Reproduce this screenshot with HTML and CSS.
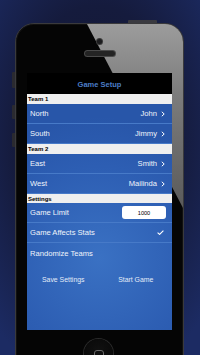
FILE: index.html
```html
<!DOCTYPE html>
<html>
<head>
<meta charset="utf-8">
<link rel="stylesheet" href="styles.css">
</head>
<body>
<div class="stage">
  <div class="btn-side btn-mute"></div>
  <div class="btn-side btn-vol1"></div>
  <div class="btn-side btn-vol2"></div>
  <div class="btn-top"></div>
  <div class="phone">
    <div class="camera"></div>
    <div class="speaker"></div>
    <div class="screen">
      <div class="nav">Game Setup</div>
      <div class="section">Team 1</div>
      <div class="row"><span class="label">North</span><span class="value">John<svg class="chev" viewBox="0 0 4 6" width="4" height="6"><path d="M0.8 0.8 L3.2 3 L0.8 5.2" fill="none" stroke="#fff" stroke-width="1"/></svg></span></div>
      <div class="row"><span class="label">South</span><span class="value">Jimmy<svg class="chev" viewBox="0 0 4 6" width="4" height="6"><path d="M0.8 0.8 L3.2 3 L0.8 5.2" fill="none" stroke="#fff" stroke-width="1"/></svg></span></div>
      <div class="section">Team 2</div>
      <div class="row"><span class="label">East</span><span class="value">Smith<svg class="chev" viewBox="0 0 4 6" width="4" height="6"><path d="M0.8 0.8 L3.2 3 L0.8 5.2" fill="none" stroke="#fff" stroke-width="1"/></svg></span></div>
      <div class="row"><span class="label">West</span><span class="value">Mailinda<svg class="chev" viewBox="0 0 4 6" width="4" height="6"><path d="M0.8 0.8 L3.2 3 L0.8 5.2" fill="none" stroke="#fff" stroke-width="1"/></svg></span></div>
      <div class="section section-short">Settings</div>
      <div class="row"><span class="label">Game Limit</span><span class="field">1000</span></div>
      <div class="row"><span class="label">Game Affects Stats</span><svg class="check" viewBox="0 0 7 5" width="7" height="5"><path d="M0.6 2.6 L2.6 4.4 L6.4 0.6" fill="none" stroke="#fff" stroke-width="1.1"/></svg></div>
      <div class="row row-last"><span class="label">Randomize Teams</span></div>
      <div class="actions">
        <span>Save Settings</span>
        <span>Start Game</span>
      </div>
    </div>
    <div class="home"><div class="home-square"></div></div>
  </div>
</div>
</body>
</html>
```
FILE: styles.css
```css
html, body {
  margin: 0;
  height: 355px;
  overflow: hidden;
}
body {
  background: radial-gradient(ellipse 75% 70% at 48% 40%, #13172f 0%, #151b3d 55%, #1c2b63 100%);
  font-family: "Liberation Sans", Arial, sans-serif;
}
.stage {
  position: relative;
  padding: 23px 0 0 15px;
}
.phone {
  position: relative;
  overflow: hidden;
  width: 169px;
  height: 372px;
  box-sizing: border-box;
  border: 1px solid #3a3a3c;
  border-radius: 19px;
  background: #050505;
  padding: 49px 11px 0;
  box-shadow: inset 0 0 0 1px #111;
}
.phone::before {
  content: "";
  position: absolute;
  left: 0;
  top: 0;
  width: 167px;
  height: 200px;
  background: linear-gradient(180deg, #9c9c9c 0%, #7c7c7c 35%, #565656 100%);
  clip-path: polygon(71px 0, 167px 0, 167px 184px);
}
.camera {
  position: absolute;
  left: 81px;
  top: 15px;
  width: 5px;
  height: 5px;
  border-radius: 50%;
  background: #1c1c1e;
  box-shadow: 0 0 0 1px #3a3a3a;
}
.speaker {
  position: absolute;
  left: 69px;
  top: 27px;
  width: 30px;
  height: 5px;
  border-radius: 3px;
  background: #242424;
  box-shadow: 0 0 0 1px #4a4a4a;
}
.screen {
  position: relative;
  z-index: 1;
  height: 257px;
  display: flex;
  flex-direction: column;
  background: radial-gradient(ellipse 95% 55% at 50% 72%, #3a71c3 0%, #2d5eb3 65%, #2856a9 100%);
  color: #fff;
}
.nav {
  height: 21px;
  box-sizing: border-box;
  padding-top: 1px;
  background: #000;
  display: flex;
  align-items: center;
  justify-content: center;
  color: #4b7dc7;
  font-weight: bold;
  font-size: 7.5px;
}
.section {
  height: 10px;
  background: #efefef;
  color: #000;
  font-weight: bold;
  font-size: 6px;
  padding-left: 1px;
  display: flex;
  align-items: center;
}
.section-short {
  height: 9px;
}
.row {
  height: 20px;
  box-sizing: border-box;
  display: flex;
  align-items: center;
  padding: 0 7px 0 3px;
  font-size: 7.6px;
  color: #f1f5fb;
  border-bottom: 1px solid #477ac8;
}
.row-last {
  border-bottom: none;
}
.label {
  flex: 1;
}
.value {
  display: flex;
  align-items: center;
  gap: 4px;
}
.chev {
  display: block;
}
.field {
  width: 44px;
  height: 13px;
  margin-right: -1px;
  background: #fff;
  border-radius: 3px;
  color: #000;
  font-size: 5.6px;
  display: flex;
  align-items: center;
  justify-content: center;
}
.check {
  display: block;
  margin-right: 1px;
}
.actions {
  display: grid;
  grid-template-columns: 1fr 1fr;
  margin-top: 13px;
  font-size: 6.9px;
  color: #e4ecf8;
  text-align: center;
}
.home {
  position: absolute;
  left: 68px;
  top: 315px;
  width: 29px;
  height: 29px;
  border-radius: 50%;
  background: radial-gradient(circle at 50% 40%, #111 0%, #060606 100%);
  box-shadow: 0 0 0 1px #2a2a2a;
  display: flex;
  justify-content: center;
  padding-top: 11px;
  box-sizing: border-box;
}
.home-square {
  width: 10px;
  height: 10px;
  border: 1px solid #6a6a6a;
  border-radius: 3px;
  box-sizing: border-box;
}
.btn-side {
  position: absolute;
  left: 12px;
  width: 3px;
  background: #2a2a30;
  border-radius: 1px 0 0 1px;
}
.btn-mute { top: 72px; height: 16px; }
.btn-vol1 { top: 105px; height: 14px; }
.btn-vol2 { top: 133px; height: 14px; }
.btn-top {
  position: absolute;
  left: 128px;
  top: 20px;
  width: 29px;
  height: 3px;
  background: #3a3a40;
  border-radius: 1px 1px 0 0;
}
```
